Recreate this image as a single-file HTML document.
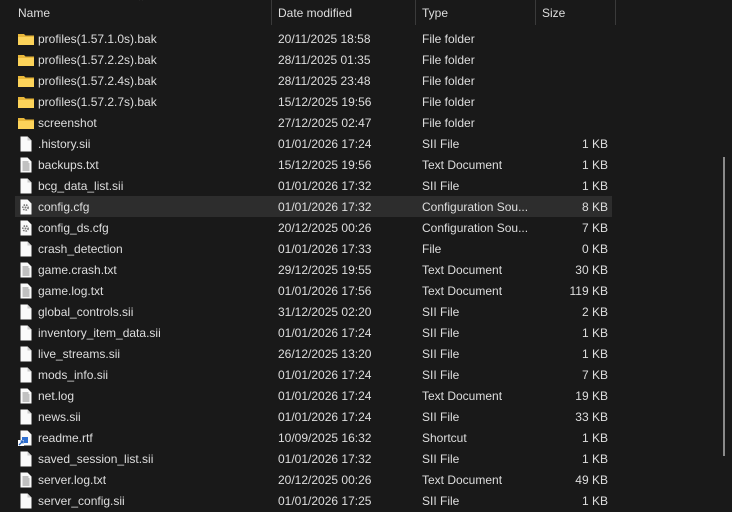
<!DOCTYPE html>
<html><head><meta charset="utf-8"><style>
body{margin:0;width:732px;height:512px;background:#191919;overflow:hidden;font-family:"Liberation Sans",sans-serif;font-size:12px;color:#dedede;position:relative}
.h{position:absolute;top:0;height:26px;line-height:26px;color:#dedede}
.sep{position:absolute;top:0;width:1px;height:25px;background:#3a3a3a}
.r{position:absolute;left:0;width:732px;height:21px;line-height:21px}
.r span{position:absolute;top:0;white-space:nowrap}
.n{left:38px}.d{left:278px}.t{left:422px}.s{right:124px}
.ic{position:absolute;left:18px;top:2px}
.sel{position:absolute;left:15px;width:597px;height:21px;background:#2d2d2d}
</style></head><body>
<div class="h" style="left:18px">Name</div>
<div style="position:absolute;left:137px;top:-3px;color:#aaa;font-size:10px">&#8963;</div>
<div class="sep" style="left:271px"></div>
<div class="h" style="left:278px">Date modified</div>
<div class="sep" style="left:415px"></div>
<div class="h" style="left:422px">Type</div>
<div class="sep" style="left:535px"></div>
<div class="h" style="left:542px">Size</div>
<div class="sep" style="left:615px"></div>
<div class="sel" style="top:196px"></div>
<div style="position:absolute;left:723px;top:157px;width:2px;height:299px;background:#8a8a8a"></div>
<div id="rows"></div>
<script>
var F='<svg class="ic" width="16" height="16" viewBox="0 0 16 16"><path d="M0 3h6l1.5 1.5H16V14H0z" fill="#e8b73a"/><path d="M0 6h16v8H0z" fill="#fcd35a"/></svg>';
var B='<svg class="ic" width="16" height="16" viewBox="0 0 16 16"><path d="M2.5 0.5h7l4 4v11h-11z" fill="#fafafa"/><path d="M9.5 0.5v4h4" fill="#ccc"/></svg>';
var T='<svg class="ic" width="16" height="16" viewBox="0 0 16 16"><path d="M2.5 0.5h7l4 4v11h-11z" fill="#fafafa"/><path d="M4.5 5h6M4.5 7h7M4.5 9h7M4.5 11h7M4.5 13h7" stroke="#888" stroke-width="1"/></svg>';
var C='<svg class="ic" width="16" height="16" viewBox="0 0 16 16"><path d="M2.5 0.5h7l4 4v11h-11z" fill="#fafafa"/><circle cx="7.5" cy="8.5" r="2.6" fill="none" stroke="#777" stroke-width="1.6" stroke-dasharray="1.5 1"/><circle cx="7.5" cy="8.5" r="1" fill="#777"/></svg>';
var S='<svg class="ic" width="16" height="16" viewBox="0 0 16 16"><path d="M2.5 0.5h7l4 4v11h-11z" fill="#fafafa"/><path d="M4 7h6v6H4z" fill="#2f6fd0"/><path d="M0 10h6v6H0z" fill="#fff"/><path d="M1 15l4-4M2.5 11H5v2.5" stroke="#2060c0" stroke-width="1.3" fill="none"/></svg>';
var d=[
[F,'profiles(1.57.1.0s).bak','20/11/2025 18:58','File folder',''],
[F,'profiles(1.57.2.2s).bak','28/11/2025 01:35','File folder',''],
[F,'profiles(1.57.2.4s).bak','28/11/2025 23:48','File folder',''],
[F,'profiles(1.57.2.7s).bak','15/12/2025 19:56','File folder',''],
[F,'screenshot','27/12/2025 02:47','File folder',''],
[B,'.history.sii','01/01/2026 17:24','SII File','1 KB'],
[T,'backups.txt','15/12/2025 19:56','Text Document','1 KB'],
[B,'bcg_data_list.sii','01/01/2026 17:32','SII File','1 KB'],
[C,'config.cfg','01/01/2026 17:32','Configuration Sou...','8 KB'],
[C,'config_ds.cfg','20/12/2025 00:26','Configuration Sou...','7 KB'],
[B,'crash_detection','01/01/2026 17:33','File','0 KB'],
[T,'game.crash.txt','29/12/2025 19:55','Text Document','30 KB'],
[T,'game.log.txt','01/01/2026 17:56','Text Document','119 KB'],
[B,'global_controls.sii','31/12/2025 02:20','SII File','2 KB'],
[B,'inventory_item_data.sii','01/01/2026 17:24','SII File','1 KB'],
[B,'live_streams.sii','26/12/2025 13:20','SII File','1 KB'],
[B,'mods_info.sii','01/01/2026 17:24','SII File','7 KB'],
[T,'net.log','01/01/2026 17:24','Text Document','19 KB'],
[B,'news.sii','01/01/2026 17:24','SII File','33 KB'],
[S,'readme.rtf','10/09/2025 16:32','Shortcut','1 KB'],
[B,'saved_session_list.sii','01/01/2026 17:32','SII File','1 KB'],
[T,'server.log.txt','20/12/2025 00:26','Text Document','49 KB'],
[B,'server_config.sii','01/01/2026 17:25','SII File','1 KB']];
var h='';d.forEach(function(r,i){h+='<div class="r" style="top:'+(29+21*i)+'px">'+r[0]+'<span class="n">'+r[1]+'</span><span class="d">'+r[2]+'</span><span class="t">'+r[3]+'</span><span class="s">'+r[4]+'</span></div>';});
document.getElementById('rows').innerHTML=h;
</script>
</body></html>
